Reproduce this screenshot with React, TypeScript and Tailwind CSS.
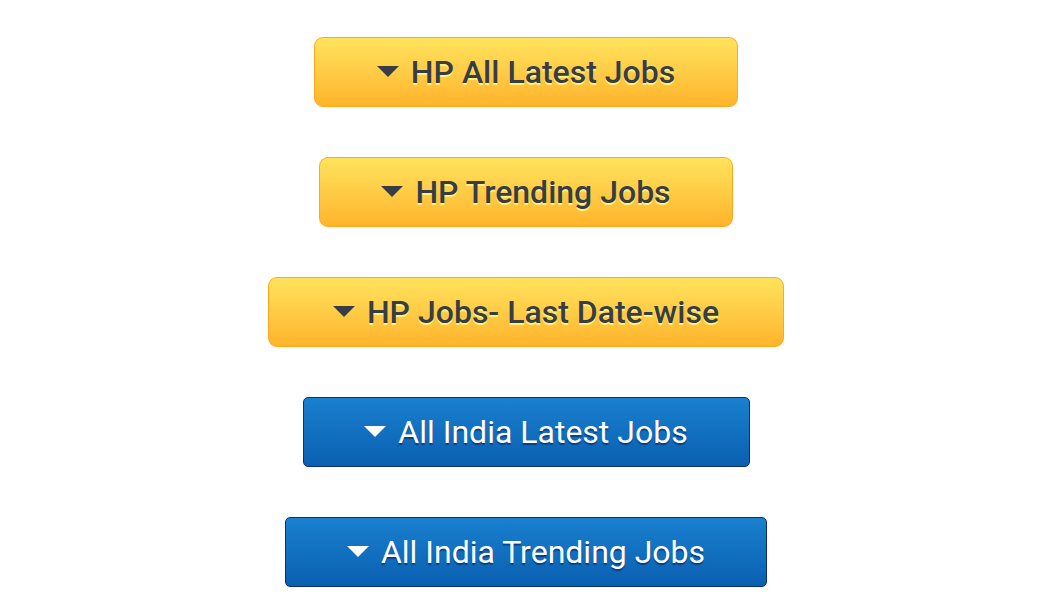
const links = [
  { label: 'HP All Latest Jobs', tone: 'gold', width: 'w-[424px]' },
  { label: 'HP Trending Jobs', tone: 'gold', width: 'w-[414px]' },
  { label: 'HP Jobs- Last Date-wise', tone: 'gold', width: 'w-[516px]' },
  { label: 'All India Latest Jobs', tone: 'blue', width: 'w-[447px]' },
  { label: 'All India Trending Jobs', tone: 'blue', width: 'w-[482px]' },
];

const Caret = ({ color }: { color: string }) => (
  <svg width="22" height="12" viewBox="0 0 22 12" className="shrink-0">
    <polygon points="0,0 22,0 11,11" fill={color} />
  </svg>
);

const App = () => {
  return (
    <div className="min-h-[592px] bg-white font-['Roboto',sans-serif]">
      <div className="flex flex-col items-center gap-[50px] pt-[37px] pb-[6px]">
        {links.map((l) =>
          l.tone === 'gold' ? (
            <button
              key={l.label}
              type="button"
              className={`${l.width} flex h-[70px] items-center justify-center gap-[12px] rounded-[9px] border border-[#ffa81f] bg-gradient-to-b from-[#ffe35c] to-[#ffb42a] text-[32px] font-medium text-[#383c45] [text-shadow:0_2px_0_#fff27a]`}
            >
              <Caret color="#383c45" />
              <span className="leading-none">{l.label}</span>
            </button>
          ) : (
            <button
              key={l.label}
              type="button"
              className={`${l.width} flex h-[70px] items-center justify-center gap-[12px] rounded-[5px] border border-[#0b2f7a] bg-gradient-to-b from-[#1a80cf] to-[#0a5fb0] text-[32px] font-normal text-white [text-shadow:0_2px_1px_#0a3f86]`}
            >
              <Caret color="#ffffff" />
              <span className="leading-none">{l.label}</span>
            </button>
          )
        )}
      </div>
    </div>
  );
};

export default App;
